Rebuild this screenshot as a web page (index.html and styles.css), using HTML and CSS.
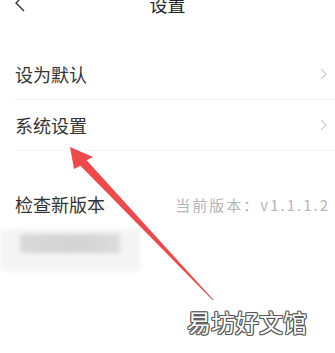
FILE: index.html
```html
<!DOCTYPE html>
<html lang="zh-CN">

<head>
    <meta charset="UTF-8">
    <meta name="viewport" content="width=device-width, initial-scale=1.0">
    <title>设置</title>
    <link rel="stylesheet" href="styles.css">
</head>

<body>
    <div class="page">
        <div class="header">
            <span class="back">
                <svg width="12" height="18" viewBox="0 0 12 18">
                    <path d="M10 1 L2 9 L10 17" fill="none" stroke="#333" stroke-width="1.4"/>
                </svg>
            </span>
            <span class="title">设置</span>
        </div>

        <div class="list">
            <div class="row">
                <span class="label">设为默认</span>
                <span class="chevron">
                    <svg width="7" height="12" viewBox="0 0 7 12">
                        <path d="M1 1 L6 6 L1 11" fill="none" stroke="#cfcfcf" stroke-width="1.2"/>
                    </svg>
                </span>
            </div>
            <div class="row">
                <span class="label">系统设置</span>
                <span class="chevron">
                    <svg width="7" height="12" viewBox="0 0 7 12">
                        <path d="M1 1 L6 6 L1 11" fill="none" stroke="#cfcfcf" stroke-width="1.2"/>
                    </svg>
                </span>
            </div>
        </div>

        <div class="list section">
            <div class="row plain">
                <span class="label">检查新版本</span>
                <span class="version">当前版本：v1.1.1.2</span>
            </div>
            <div class="blurred">
                <div class="blur-bar"></div>
            </div>
        </div>

        <svg class="arrow" width="335" height="353" viewBox="0 0 335 353">
            <polygon points="70,147 93,157 86.6,160.3 213.4,299.7 212.6,300.3 80.4,165.7 74,169" fill="#ef4a4b"/>
        </svg>

        <div class="watermark">易坊好文馆</div>
    </div>
</body>

</html>
```

FILE: styles.css
```css
body {
    margin: 0;
    background: #ffffff;
    font-family: "Noto Sans CJK SC", "Noto Sans", sans-serif;
    color: #333;
}

.page {
    position: relative;
    width: 335px;
    height: 353px;
    overflow: hidden;
}

.header {
    display: flex;
    align-items: center;
    justify-content: center;
    height: 30px;
    margin-top: -11px;
    position: relative;
}

.back {
    position: absolute;
    left: 14px;
    top: 4px;
}

.title {
    font-size: 18px;
    color: #222;
}

.list {
    margin-top: 30px;
}

.section {
    margin-top: 28px;
}

.row {
    display: flex;
    align-items: center;
    justify-content: space-between;
    height: 50px;
    margin-left: 15px;
    padding-right: 8px;
    border-bottom: 1px solid #f2f2f2;
}

.row.plain {
    border-bottom: none;
    padding-right: 5px;
}

.label {
    font-size: 18px;
    color: #333;
}

.chevron {
    display: flex;
}

.version {
    font-size: 15px;
    letter-spacing: 2px;
    color: #b5b5b5;
}

.blurred {
    height: 42px;
    width: 140px;
    background: #f4f4f4;
    filter: blur(2px);
    padding-top: 5px;
    box-sizing: border-box;
}

.blur-bar {
    width: 100px;
    height: 19px;
    margin-left: 20px;
    background: linear-gradient(to right, #d9d9d9 0%, #d4d4d4 60%, #dcdcdc 100%);
}

.arrow {
    position: absolute;
    left: 0;
    top: 0;
}

.watermark {
    position: absolute;
    left: 187px;
    top: 304px;
    font-size: 24px;
    color: #ffffff;
    text-shadow:
        1px 0 0 #5a5a5a, -1px 0 0 #5a5a5a, 0 1px 0 #5a5a5a, 0 -1px 0 #5a5a5a,
        1px 1px 0 #5a5a5a, -1px -1px 0 #5a5a5a, 1px -1px 0 #5a5a5a, -1px 1px 0 #5a5a5a;
}
```
